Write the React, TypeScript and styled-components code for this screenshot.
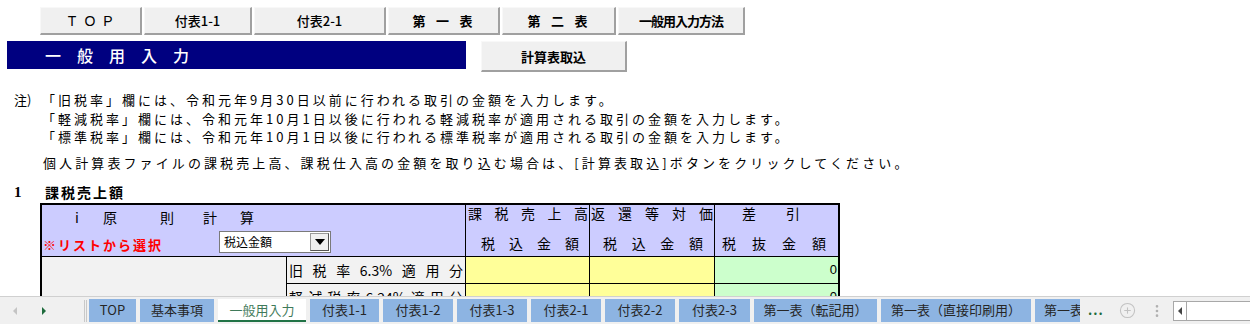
import React from "react";
import styled, { createGlobalStyle } from "styled-components";
import { CirclePlus, EllipsisVertical } from "lucide-react";

const GlobalStyle = createGlobalStyle`
  html, body {
    margin: 0;
    padding: 0;
    background: #ffffff;
  }
  body {
    font-family: "Noto Sans CJK JP", "Noto Sans", sans-serif;
    color: #000;
  }
`;

const navButtons = [
  { label: "T O P", width: 102, bold: false, spacing: 0.5, latin: true },
  { label: "付表1-1", width: 108, bold: false, spacing: 0 },
  { label: "付表2-1", width: 132, bold: false, spacing: 0 },
  { label: "第 一 表", width: 112, bold: true, spacing: 2 },
  { label: "第 二 表", width: 114, bold: true, spacing: 2 },
  { label: "一般用入力方法", width: 127, bold: true, spacing: -1 },
];

const notes = [
  "「旧税率」欄には、令和元年9月30日以前に行われる取引の金額を入力します。",
  "「軽減税率」欄には、令和元年10月1日以後に行われる軽減税率が適用される取引の金額を入力します。",
  "「標準税率」欄には、令和元年10月1日以後に行われる標準税率が適用される取引の金額を入力します。",
];

const rows = [
  { label: ["旧", "税", "率", "6.3%", "適", "用", "分"] },
  { label: ["軽", "減", "税", "率", "6.24%", "適", "用", "分"] },
];

const tabs = [
  { name: "TOP", width: 47 },
  { name: "基本事項", width: 74 },
  { name: "一般用入力", width: 88, active: true },
  { name: "付表1-1", width: 69 },
  { name: "付表1-2", width: 70 },
  { name: "付表1-3", width: 70 },
  { name: "付表2-1", width: 70 },
  { name: "付表2-2", width: 70 },
  { name: "付表2-3", width: 71 },
  { name: "第一表（転記用）", width: 123 },
  { name: "第一表（直接印刷用）", width: 150 },
  { name: "第一表", width: 45, cut: true },
];

const chars = (list: string[]) =>
  list.map((c, i) => <span key={i}>{c}</span>);

export default function App() {
  return (
    <>
      <GlobalStyle />
      <Page>
        <Sheet>
          <NavRow>
            {navButtons.map((b) => (
              <NavButton
                key={b.label}
                $w={b.width}
                $bold={b.bold}
                $spacing={b.spacing}
                $latin={!!b.latin}
              >
                {b.label.split(" ").join("\u2002")}
              </NavButton>
            ))}
          </NavRow>

          <TitleRow>
            <TitleBar>一　般　用　入　力</TitleBar>
            <ImportButton>計算表取込</ImportButton>
          </TitleRow>

          <Notes>
            <NoteMark>注)</NoteMark>
            <NoteLines>
              {notes.map((n) => (
                <NoteLine key={n}>{n}</NoteLine>
              ))}
            </NoteLines>
          </Notes>
          <ExtraNote>
            個人計算表ファイルの課税売上高、課税仕入高の金額を取り込む場合は、[計算表取込]ボタンをクリックしてください。
          </ExtraNote>

          <SectionHeading>
            <SectionNo>1</SectionNo>
            <span>課税売上額</span>
          </SectionHeading>

          <Grid>
            <MethodHead>
              <MethodTitle>
                <Slot $w={28}>i</Slot>
                <Slot $w={57}>原</Slot>
                <Slot $w={43}>則</Slot>
                <Slot $w={37}>計</Slot>
                <Slot $w={20}>算</Slot>
              </MethodTitle>
              <MethodPick>
                <PickNote>※リストから選択</PickNote>
                <Select>
                  <SelectValue>税込金額</SelectValue>
                  <SelectArrow>
                    <Triangle />
                  </SelectArrow>
                </Select>
              </MethodPick>
            </MethodHead>

            <ColHead>
              <Spread $l={2} $r={1}>{chars(["課", "税", "売", "上", "高"])}</Spread>
              <Spread $l={15} $r={10}>{chars(["税", "込", "金", "額"])}</Spread>
            </ColHead>
            <ColHead>
              <Spread $l={1} $r={1}>{chars(["返", "還", "等", "対", "価"])}</Spread>
              <Spread $l={13} $r={11}>{chars(["税", "込", "金", "額"])}</Spread>
            </ColHead>
            <ColHead $last>
              <Spread $l={27} $r={38}>{chars(["差", "引"])}</Spread>
              <Spread $l={7} $r={12}>{chars(["税", "抜", "金", "額"])}</Spread>
            </ColHead>

            <Blank />
            {rows.map((r, i) => (
              <React.Fragment key={i}>
                <RowLabel>
                  <Spread $l={2} $r={2}>{chars(r.label)}</Spread>
                </RowLabel>
                <Cell $bg="#ffff99" />
                <Cell $bg="#ffff99" />
                <Cell $bg="#ccffcc" $last>
                  0
                </Cell>
              </React.Fragment>
            ))}
          </Grid>
        </Sheet>

        <TabBar>
          <TabNav>
            <Arrow $dir="left" $color="#c4c4c4" />
            <Arrow $dir="right" $color="#1e6b3c" />
          </TabNav>
          <TabList>
            {tabs.map((t) => (
              <Tab key={t.name} $w={t.width} $active={t.active} $cut={t.cut}>
                {t.name}
              </Tab>
            ))}
          </TabList>
          <MoreDots>...</MoreDots>
          <TabTools>
            <CirclePlus size={17} color="#c2c2c2" strokeWidth={1.5} />
            <EllipsisVertical size={16} color="#b0b0b0" strokeWidth={2} />
          </TabTools>
          <HScroll>
            <ScrollArrow>
              <Arrow $dir="left" $color="#444" />
            </ScrollArrow>
          </HScroll>
        </TabBar>
      </Page>
    </>
  );
}

const Page = styled.div`
  width: 1250px;
  height: 324px;
  display: flex;
  flex-direction: column;
  overflow: hidden;
`;

const Sheet = styled.div`
  flex: 1;
  min-height: 0;
  overflow: hidden;
`;

const NavRow = styled.div`
  display: flex;
  gap: 2px;
  padding: 7px 0 0 40px;
`;

const NavButton = styled.div<{
  $w: number;
  $bold: boolean;
  $spacing: number;
  $latin: boolean;
}>`
  box-sizing: border-box;
  width: ${(p) => p.$w}px;
  height: 28px;
  display: flex;
  align-items: center;
  justify-content: center;
  background: #f0f0f0;
  border-top: 1px solid #f8f8f8;
  border-left: 1px solid #f8f8f8;
  border-right: 2px solid #a0a0a0;
  border-bottom: 2px solid #a0a0a0;
  font-size: ${(p) => (p.$latin ? "14px" : "13px")};
  font-weight: ${(p) => (p.$bold ? 700 : 500)};
  letter-spacing: ${(p) => p.$spacing}px;
  white-space: pre;
  font-family: ${(p) =>
    p.$latin ? `"Liberation Sans", sans-serif` : `"Noto Sans CJK JP", sans-serif`};
`;

const TitleRow = styled.div`
  display: flex;
  align-items: flex-start;
  margin-top: 6px;
  height: 31px;
`;

const TitleBar = styled.div`
  box-sizing: border-box;
  margin-left: 7px;
  width: 459px;
  height: 28px;
  background: #000080;
  color: #fff;
  font-size: 16px;
  font-weight: 500;
  line-height: 28px;
  padding-left: 38px;
`;

const ImportButton = styled.div`
  box-sizing: border-box;
  margin-left: 15px;
  width: 146px;
  height: 31px;
  display: flex;
  align-items: center;
  justify-content: center;
  background: #f0f0f0;
  border-top: 1px solid #f8f8f8;
  border-left: 1px solid #f8f8f8;
  border-right: 2px solid #a0a0a0;
  border-bottom: 2px solid #a0a0a0;
  font-size: 13px;
  font-weight: 700;
`;

const Notes = styled.div`
  display: flex;
  margin-top: 19px;
  padding-left: 14px;
  font-size: 13px;
  letter-spacing: 3px;
  line-height: 18.5px;
`;

const NoteMark = styled.div`
  width: 30px;
  letter-spacing: 0;
`;

const NoteLines = styled.div`
  display: flex;
  flex-direction: column;
  margin-left: -2px;
`;

const NoteLine = styled.div`
  white-space: nowrap;
`;

const ExtraNote = styled.div`
  margin-top: 7.5px;
  padding-left: 43px;
  font-size: 13px;
  letter-spacing: 3.1px;
  line-height: 18.5px;
  white-space: nowrap;
`;

const SectionHeading = styled.div`
  display: flex;
  margin-top: 10px;
  padding-left: 14px;
  font-size: 14px;
  font-weight: 700;
  line-height: 18px;
  letter-spacing: 2px;
`;

const SectionNo = styled.span`
  width: 31px;
  font-family: "Liberation Serif", serif;
  font-size: 15px;
`;

const Grid = styled.div`
  margin: 2px 0 0 40px;
  width: 800px;
  box-sizing: border-box;
  border: 2px solid #000;
  display: grid;
  grid-template-columns: 245px 179px 124px 125px 123px;
  grid-template-rows: 52px 27px 27px;
  font-size: 13px;
`;

const MethodHead = styled.div`
  grid-column: 1 / 3;
  background: #ccccff;
  border-right: 1px solid #000;
  border-bottom: 1px solid #000;
  display: flex;
  flex-direction: column;
`;

const MethodTitle = styled.div`
  display: flex;
  padding: 4px 0 0 33px;
  font-size: 14px;
  line-height: 17px;
`;

const Slot = styled.span<{ $w: number }>`
  width: ${(p) => p.$w}px;
`;

const MethodPick = styled.div`
  display: flex;
  align-items: center;
  margin-top: 4px;
  padding-left: 1px;
`;

const PickNote = styled.span`
  width: 176px;
  color: #ff0000;
  font-weight: 700;
  font-size: 13px;
  letter-spacing: 2px;
  padding-top: 5px;
`;

const Select = styled.div`
  box-sizing: border-box;
  width: 112px;
  height: 22px;
  background: #fff;
  border: 1px solid #7a7a7a;
  display: flex;
  align-items: center;
  justify-content: space-between;
  padding: 0 1px 0 4px;
`;

const SelectValue = styled.span`
  font-size: 12px;
`;

const SelectArrow = styled.span`
  box-sizing: border-box;
  width: 19px;
  height: 18px;
  background: #f0f0f0;
  border: 1px solid #9a9a9a;
  border-right-color: #555;
  border-bottom-color: #555;
  display: flex;
  align-items: center;
  justify-content: center;
`;

const Triangle = styled.span`
  width: 0;
  height: 0;
  border-left: 5px solid transparent;
  border-right: 5px solid transparent;
  border-top: 6px solid #000;
`;

const ColHead = styled.div<{ $last?: boolean }>`
  background: #ccccff;
  border-right: ${(p) => (p.$last ? "none" : "1px solid #000")};
  border-bottom: 1px solid #000;
  display: flex;
  flex-direction: column;
  justify-content: space-between;
  padding: 0 0 5px;
  font-size: 14px;
  line-height: 16px;
`;

const Spread = styled.div<{ $l: number; $r: number }>`
  display: flex;
  justify-content: space-between;
  padding: 0 ${(p) => p.$r}px 0 ${(p) => p.$l}px;
  white-space: nowrap;
`;

const Blank = styled.div`
  grid-row: 2 / 4;
  background: #f2f2f2;
  border-right: 1px solid #000;
`;

const RowLabel = styled.div`
  background: #f2f2f2;
  border-right: 1px solid #000;
  border-bottom: 1px solid #000;
  display: flex;
  flex-direction: column;
  justify-content: center;
  font-size: 14px;
`;

const Cell = styled.div<{ $bg: string; $last?: boolean }>`
  background: ${(p) => p.$bg};
  border-right: ${(p) => (p.$last ? "none" : "1px solid #000")};
  border-bottom: 1px solid #000;
  display: flex;
  align-items: center;
  justify-content: flex-end;
  padding-right: 1px;
  font-family: "Liberation Sans", sans-serif;
  font-size: 13px;
`;

const TabBar = styled.div`
  height: 28px;
  box-sizing: border-box;
  flex-shrink: 0;
  background: #f0f0f0;
  border-top: 1px solid #d0d0d0;
  display: flex;
  align-items: center;
  font-size: 13px;
`;

const TabNav = styled.div`
  width: 87px;
  height: 22px;
  box-sizing: border-box;
  display: flex;
  align-items: center;
  gap: 25px;
  padding-left: 13px;
  border-right: 3px double #c8c8c8;
`;

const Arrow = styled.span<{ $dir: "left" | "right"; $color: string }>`
  width: 0;
  height: 0;
  border-top: 4px solid transparent;
  border-bottom: 4px solid transparent;
  ${(p) =>
    p.$dir === "left"
      ? `border-right: 4px solid ${p.$color};`
      : `border-left: 4px solid ${p.$color};`}
`;

const TabList = styled.div`
  display: flex;
  align-items: stretch;
  height: 23px;
  align-self: flex-end;
  margin-bottom: 2px;
  padding-left: 2px;
`;

const Tab = styled.div<{ $w: number; $active?: boolean; $cut?: boolean }>`
  box-sizing: border-box;
  width: ${(p) => p.$w}px;
  margin-right: 4px;
  position: relative;
  display: flex;
  align-items: center;
  justify-content: ${(p) => (p.$cut ? "flex-start" : "center")};
  padding-left: ${(p) => (p.$cut ? "9px" : "0")};
  overflow: hidden;
  white-space: nowrap;
  background: ${(p) => (p.$active ? "#ffffff" : "#8db4e2")};
  color: ${(p) => (p.$active ? "#3f7a5a" : "#262626")};
  border-bottom: ${(p) => (p.$active ? "2px solid #217346" : "2px solid #8db4e2")};

  &::after {
    content: "";
    position: absolute;
    right: -3px;
    top: 2px;
    bottom: 2px;
    width: 1px;
    background: #b8b8b8;
  }
`;

const MoreDots = styled.span`
  margin-left: 4px;
  color: #1e6b3c;
  font-weight: 700;
  letter-spacing: 1px;
  padding-bottom: 2px;
`;

const TabTools = styled.div`
  display: flex;
  align-items: center;
  gap: 13px;
  margin-left: 15px;
`;

const HScroll = styled.div`
  margin-left: 8px;
  flex: 1;
  height: 20px;
  box-sizing: border-box;
  background: #fff;
  border: 1px solid #a8a8a8;
  border-right: none;
  display: flex;
`;

const ScrollArrow = styled.div`
  width: 12px;
  border-right: 1px solid #a8a8a8;
  display: flex;
  align-items: center;
  justify-content: center;
`;
